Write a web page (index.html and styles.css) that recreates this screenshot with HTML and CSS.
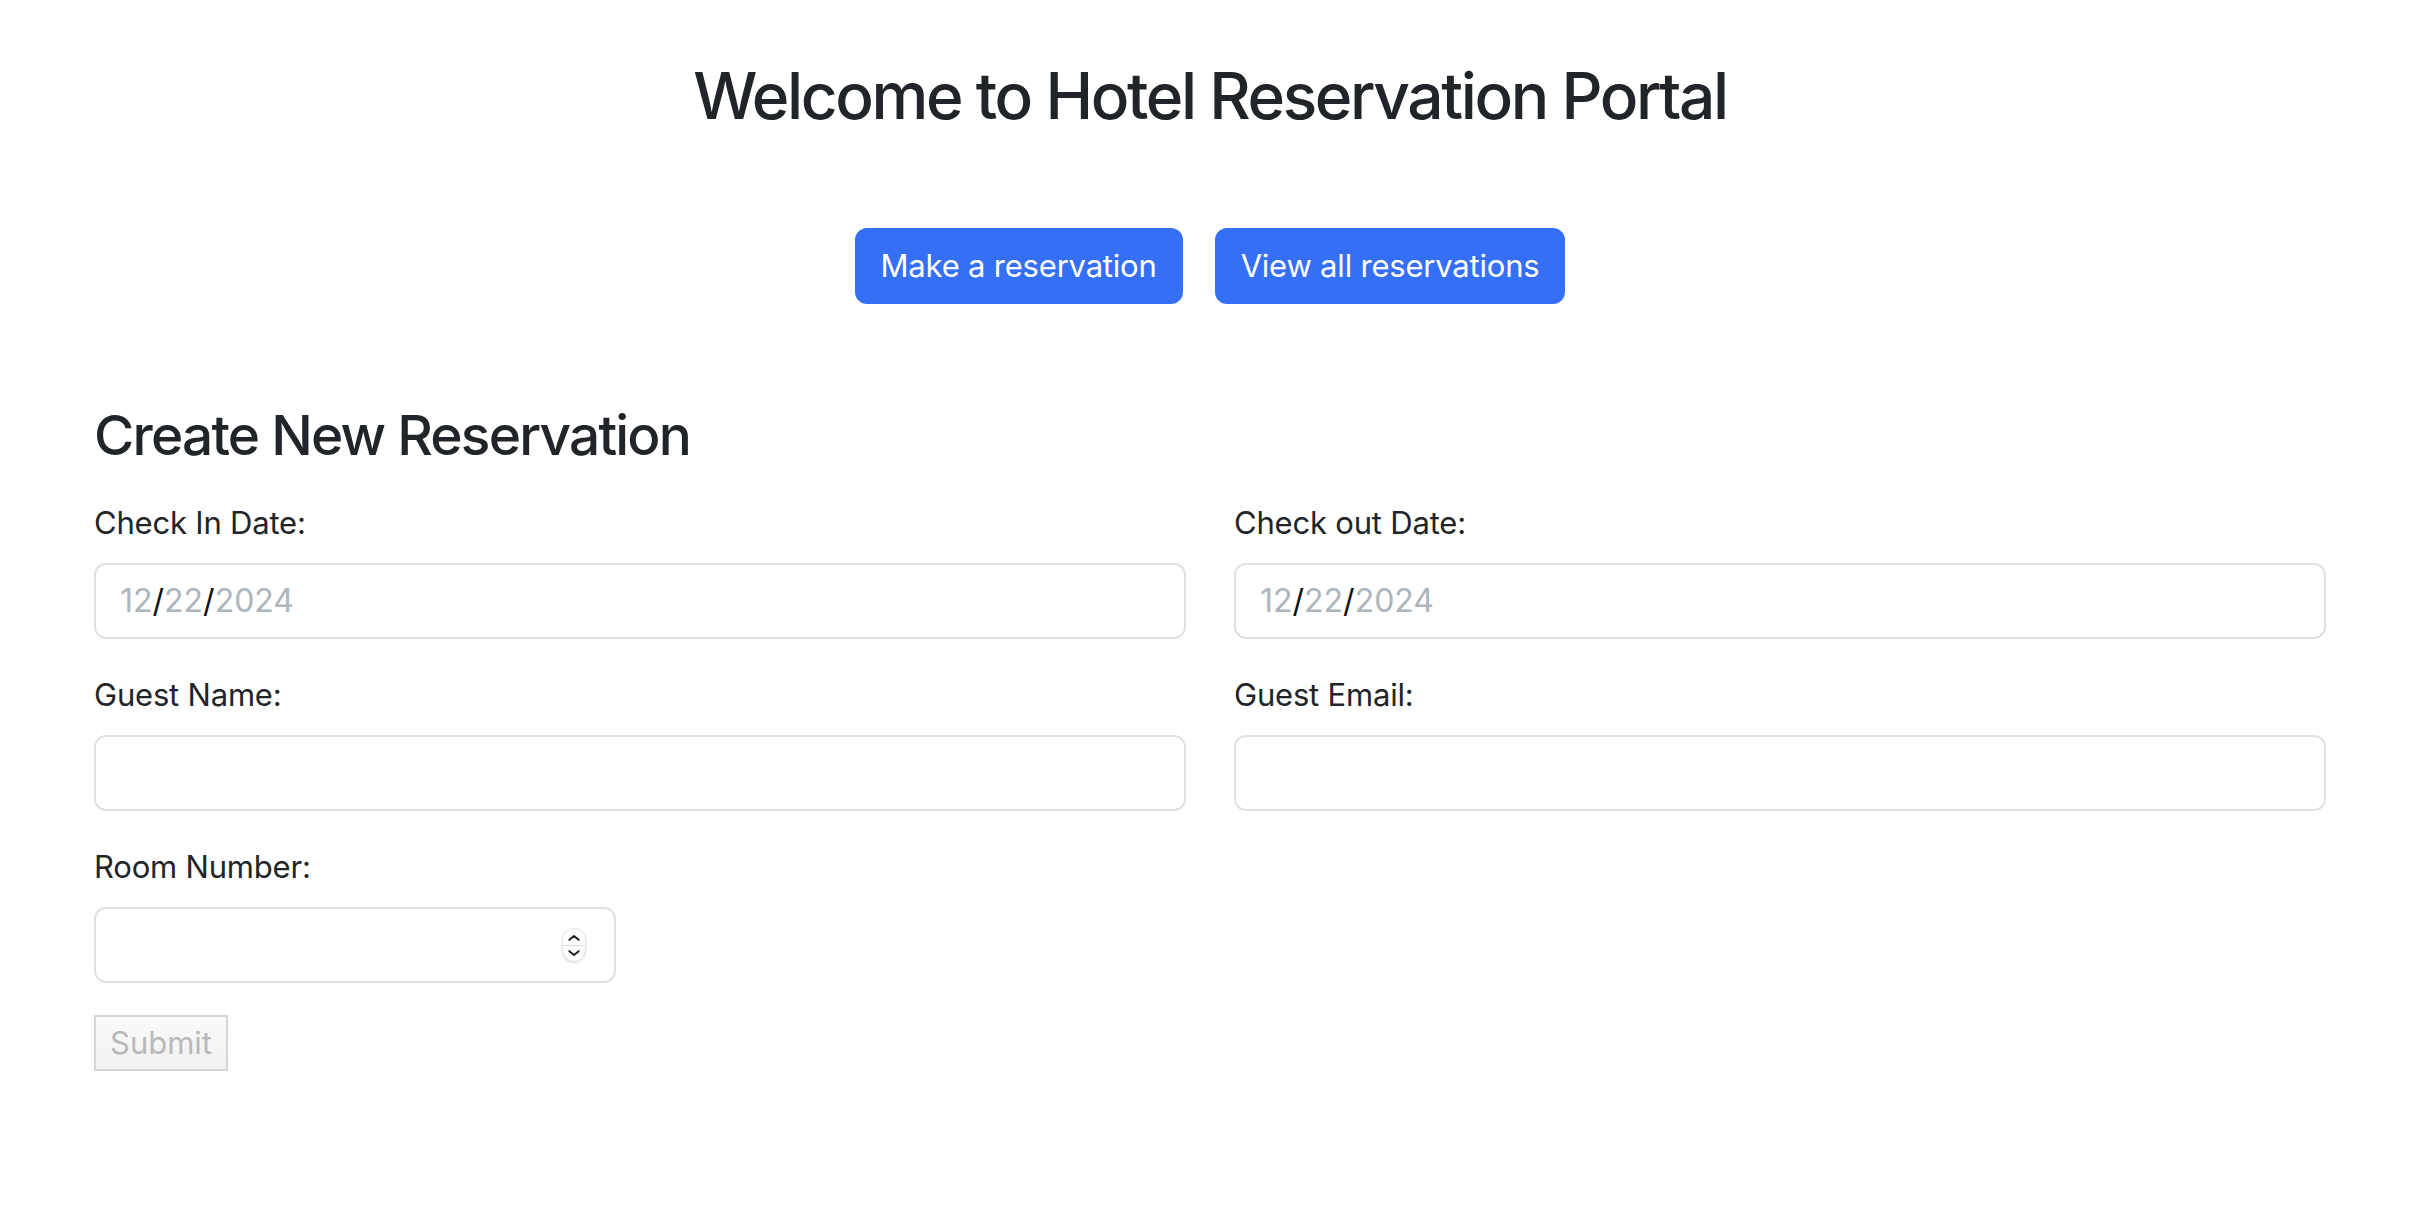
FILE: index.html
```html
<!DOCTYPE html>
<html lang="en">
<head>
<meta charset="utf-8">
<title>Hotel Reservation Portal</title>
<link rel="stylesheet" href="styles.css">
</head>
<body>
<div class="container">
  <h1 class="title">Welcome to Hotel Reservation Portal</h1>
  <div class="nav-buttons">
    <button class="btn-primary" type="button">Make a reservation</button>
    <button class="btn-primary" type="button">View all reservations</button>
  </div>
  <h2 class="section-title">Create New Reservation</h2>
  <form class="form">
    <div class="form-row">
      <div class="field">
        <label class="form-label">Check In Date:</label>
        <div class="form-control date"><span class="dp">12</span><span class="ds">/</span><span class="dp">22</span><span class="ds">/</span><span class="dp">2024</span></div>
      </div>
      <div class="field">
        <label class="form-label">Check out Date:</label>
        <div class="form-control date"><span class="dp">12</span><span class="ds">/</span><span class="dp">22</span><span class="ds">/</span><span class="dp">2024</span></div>
      </div>
    </div>
    <div class="form-row">
      <div class="field">
        <label class="form-label">Guest Name:</label>
        <div class="form-control"></div>
      </div>
      <div class="field">
        <label class="form-label">Guest Email:</label>
        <div class="form-control"></div>
      </div>
    </div>
    <div class="form-row">
      <div class="field field-narrow">
        <label class="form-label">Room Number:</label>
        <div class="form-control number">
          <span class="spinner">
            <svg class="chev" width="18" height="10" viewBox="0 0 18 10"><path d="M3 8 L9 3 L15 8" fill="none" stroke="#222" stroke-width="2.6" stroke-linecap="round" stroke-linejoin="round"/></svg>
            <span class="spin-sep"></span>
            <svg class="chev" width="18" height="10" viewBox="0 0 18 10"><path d="M3 2 L9 7 L15 2" fill="none" stroke="#222" stroke-width="2.6" stroke-linecap="round" stroke-linejoin="round"/></svg>
          </span>
        </div>
      </div>
    </div>
    <button class="submit" type="button" disabled>Submit</button>
  </form>
</div>
</body>
</html>
```

FILE: styles.css
```css
* { box-sizing: border-box; }
html, body { margin: 0; padding: 0; background: #fff; }
body {
  font-family: Inter, "Noto Sans", Roboto, sans-serif;
  color: #212529;
  font-size: 32px;
  line-height: 48px;
}
.container {
  width: 2232px;
  margin: 0 auto;
}
.title {
  margin: 48px 0 0;
  font-size: 64px;
  line-height: 96px;
  font-weight: 500;
  text-align: center;
  letter-spacing: -2.4px;
}
.nav-buttons {
  display: flex;
  justify-content: center;
  gap: 32px;
  margin-top: 84px;
}
.btn-primary {
  font-family: inherit;
  font-size: 31px;
  line-height: 48px;
  padding: 12px 24px;
  height: 76px;
  border: 2px solid #356ff5;
  border-radius: 12px;
  background: #356ff5;
  color: #fff;
  letter-spacing: -0.2px;
}
.section-title {
  margin: 93px 0 0;
  font-size: 55px;
  line-height: 77px;
  font-weight: 500;
  letter-spacing: -1.8px;
}
.form { margin-top: 25px; }
.form-row {
  display: grid;
  grid-template-columns: 1092px 1092px;
  column-gap: 48px;
  margin-bottom: 32px;
}
.field { display: flex; flex-direction: column; }
.field-narrow { width: 522px; }
.form-label {
  display: block;
  font-size: 31px;
  line-height: 48px;
  margin-bottom: 16px;
  letter-spacing: -0.2px;
}
.form-control {
  height: 76px;
  border: 2px solid #dee2e6;
  border-radius: 12px;
  background: #fff;
  padding: 12px 24px;
  display: flex;
  align-items: center;
  font-size: 32px;
}
.date .dp { color: #adb5bd; }
.date .ds { color: #111; }
.number { justify-content: flex-end; padding-right: 28px; }
.spinner {
  width: 24px;
  height: 34px;
  border-radius: 12px;
  border: 1px solid #e4e4e4;
  background: #fff;
  box-shadow: 0 1px 2px rgba(0,0,0,0.12);
  display: flex;
  flex-direction: column;
  align-items: center;
  justify-content: center;
}
.chev { width: 14px; height: 9px; display: block; }
.spin-sep { width: 22px; height: 1px; background: #ddd; margin: 3px 0; }
.submit {
  display: block;
  font-family: inherit;
  font-size: 31px;
  line-height: 48px;
  padding: 2px 14px;
  height: 56px;
  border: 2px solid #d6d6d6;
  background: linear-gradient(#fafafa, #f0f0f0);
  color: #b9b9b9;
  border-radius: 0;
}
```
